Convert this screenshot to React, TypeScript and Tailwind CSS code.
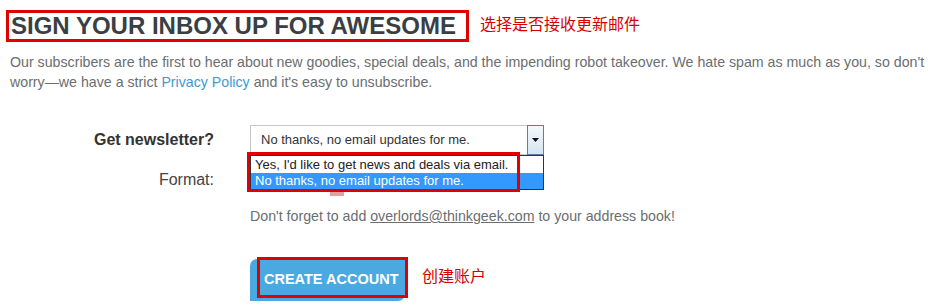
import React from 'react';

const App: React.FC = () => {
  return (
    <div className="w-[933px] h-[306px] bg-white overflow-hidden font-['Liberation_Sans',Arial,sans-serif] text-[#666]">
      <div className="flex items-center pt-[10px] pl-[6px]">
        <h1 className="border-[3px] border-[#e00000] h-[32px] w-[463px] pl-[2px] flex items-center text-[24px] font-bold text-[#3a3f44] leading-none">
          SIGN YOUR INBOX UP FOR AWESOME
        </h1>
        <span className="ml-[11px] -mt-[7px] text-[16px] text-[#d40000] font-['Noto_Sans_CJK_SC',sans-serif]">
          选择是否接收更新邮件
        </span>
      </div>

      <p className="mt-[10px] pl-[10px] text-[14.2px] leading-[20px] text-[#6b6e70]">
        Our subscribers are the first to hear about new goodies, special deals, and the impending robot takeover. We hate spam as much as you, so don't worry—we have a strict{' '}
        <a className="text-[#3d9bd3]">Privacy Policy</a> and it's easy to unsubscribe.
      </p>

      <div className="mt-[33px] grid grid-cols-[214px_1fr] gap-x-[36px]">
        <label className="h-[30px] flex items-center justify-end text-[16px] font-bold text-[#333]">
          Get newsletter?
        </label>
        <div className="relative w-[294px] h-[30px]">
          <div className="h-full flex items-center border border-[#c8c8c8] bg-white pl-[10px] text-[13px] text-[#333]">
            No thanks, no email updates for me.
          </div>
          <div className="absolute right-0 top-0 w-[17px] h-[30px] border border-[#5f7f9f] bg-gradient-to-b from-[#f4f8fc] to-[#d6e4f0] flex items-center justify-center">
            <svg width="7" height="4" viewBox="0 0 7 4">
              <path d="M0 0h7L3.5 4z" fill="#111" />
            </svg>
          </div>
          <div className="absolute left-[80px] top-[64px] w-[14px] h-[7px] bg-[#e4a0a0]" />
          <div className="absolute left-0 top-[30px] w-[294px] h-[35px] border border-[#333] bg-white z-10 text-[13px] leading-[16px]">
            <div className="pl-[4px] pt-[1px] h-[17px] text-[#222]">Yes, I'd like to get news and deals via email.</div>
            <div className="pl-[4px] h-[16px] bg-[#3399ff] text-white">No thanks, no email updates for me.</div>
          </div>
          <div className="absolute left-[-3px] top-[27px] w-[273px] h-[40px] border-[3px] border-[#e00000] z-20" />
        </div>

        <label className="h-[50px] flex items-center justify-end text-[16px] text-[#444]">
          Format:
        </label>
        <div className="h-[50px]" />

        <div />
        <p className="mt-[1px] text-[14.2px] leading-[20px] text-[#6b6e70]">
          Don't forget to add <span className="underline">overlords@thinkgeek.com</span> to your address book!
        </p>

        <div />
        <div className="mt-[33px] flex items-center">
          <div className="relative">
            <button className="h-[42px] w-[155px] rounded-tl-[7px] rounded-br-[7px] bg-[#4aa9e0] text-white text-[14.5px] font-bold pl-[14px] text-left">
              CREATE ACCOUNT
            </button>
            <div className="absolute left-[7px] top-[-2px] w-[151px] h-[41px] border-[3px] border-[#e00000]" />
          </div>
          <span className="ml-[17px] -mt-[10px] text-[16px] text-[#d40000] font-['Noto_Sans_CJK_SC',sans-serif]">
            创建账户
          </span>
        </div>
      </div>
    </div>
  );
};

export default App;
